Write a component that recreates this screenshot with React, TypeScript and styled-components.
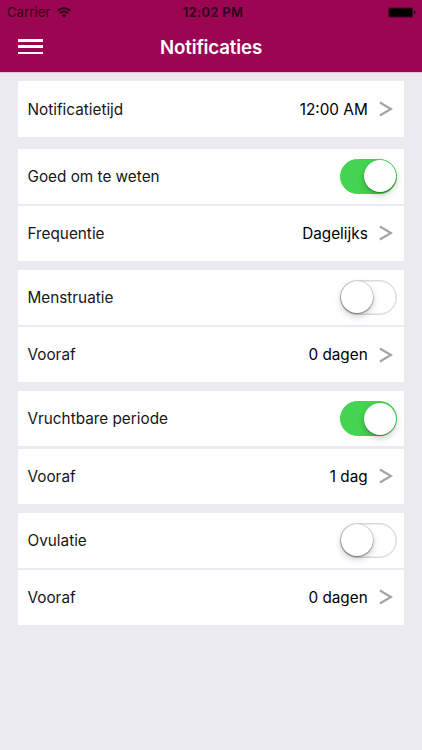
import React, { useState } from "react";
import styled, { createGlobalStyle } from "styled-components";

const GlobalStyle = createGlobalStyle`
  * { box-sizing: border-box; }
  body {
    margin: 0;
    background: #ebeaf0;
    font-family: Inter, "Liberation Sans", sans-serif;
    color: #161616;
  }
`;

const Screen = styled.div`
  width: 422px;
  height: 750px;
  overflow: hidden;
  background: #ebeaf0;
`;

const Header = styled.header`
  height: 73px;
  background: #9b0552;
  border-bottom: 1px solid #efbdd7;
`;

const StatusBar = styled.div`
  height: 24px;
  padding: 0 6px 0 7px;
  display: grid;
  grid-template-columns: 1fr auto 1fr;
  align-items: center;
  font-size: 13px;
  line-height: 24px;
  color: #2b0418;
`;

const Carrier = styled.div`
  display: flex;
  align-items: center;
  gap: 6.5px;
  letter-spacing: 0.1px;
`;

const Clock = styled.div`
  font-weight: 600;
  letter-spacing: 0.3px;
  padding-left: 3px;
`;

const BatteryIcon = styled.svg`
  justify-self: end;
`;

const NavBar = styled.div`
  height: 48px;
  padding: 0 18px;
  display: grid;
  grid-template-columns: 26px 1fr 26px;
  align-items: center;
`;

const MenuButton = styled.button`
  width: 25px;
  height: 15px;
  padding: 0;
  border: 0;
  background: none;
  display: flex;
  flex-direction: column;
  justify-content: space-between;
  margin-top: -3px;
`;

const MenuLine = styled.span`
  height: 2.5px;
  background: #fff;
`;

const Title = styled.h1`
  margin: 0;
  text-align: center;
  color: #fff;
  font-size: 18.7px;
  font-weight: 600;
  line-height: 48px;
  letter-spacing: -0.15px;
`;

const List = styled.main`
  padding: 8px 18.3px 0 18px;
`;

const Group = styled.section<{ $gap: number }>`
  display: grid;
  row-gap: 2.3px;
  margin-bottom: ${(p) => p.$gap}px;
`;

const Row = styled.div<{ $height?: number }>`
  height: ${(p) => p.$height ?? 55}px;
  padding: 0 7px 0 9.5px;
  display: flex;
  align-items: center;
  justify-content: space-between;
  background: #fff;
  font-size: 15.3px;
`;

const Value = styled.div`
  display: flex;
  align-items: center;
  gap: 11px;
  padding-right: 4px;
  color: #000;
`;

const Track = styled.button<{ $on: boolean }>`
  width: 57px;
  height: 35px;
  padding: 0;
  border: 1.5px solid ${(p) => (p.$on ? "#43d551" : "#dadada")};
  border-radius: 18px;
  background: ${(p) => (p.$on ? "#43d551" : "#fff")};
  box-shadow: inset 0 0 0 0.5px ${(p) => (p.$on ? "#43d551" : "#dadada")};
  display: flex;
  align-items: center;
  justify-content: ${(p) => (p.$on ? "flex-end" : "flex-start")};
`;

const Thumb = styled.span<{ $on: boolean }>`
  width: 32px;
  height: 32px;
  border-radius: 50%;
  background: #fff;
  box-shadow: ${(p) =>
    p.$on
      ? "0 1px 1px rgba(0,40,0,.35), 0 3px 7px rgba(0,0,0,.22)"
      : "0 0.5px 1px 0.5px rgba(0,0,0,.38), 0 3px 7px rgba(0,0,0,.22)"};
`;

function Chevron() {
  return (
    <svg width="14" height="18" viewBox="0 0 14 18" fill="none">
      <path d="M0.9 2.5 12 9 0.9 15.5" stroke="#a3a3a3" strokeWidth="2.1" />
    </svg>
  );
}

function Wifi() {
  return (
    <svg width="14" height="11" viewBox="0 0 14 11" fill="none" stroke="#2b0418" strokeWidth="1.9">
      <path d="M0.8 3.7a8.9 8.9 0 0 1 12.4 0" />
      <path d="M3 6.3a5.7 5.7 0 0 1 8 0" />
      <path d="M7 10.7 4.8 8.3a3 3 0 0 1 4.4 0z" fill="#2b0418" stroke="none" />
    </svg>
  );
}

function Switch({ initial, label }: { initial: boolean; label: string }) {
  const [on, setOn] = useState(initial);
  return (
    <Track $on={on} role="switch" aria-checked={on} aria-label={label} onClick={() => setOn(!on)}>
      <Thumb $on={on} />
    </Track>
  );
}

function ValueRow({ label, value, height }: { label: string; value: string; height?: number }) {
  return (
    <Row $height={height}>
      <span>{label}</span>
      <Value>
        <span>{value}</span>
        <Chevron />
      </Value>
    </Row>
  );
}

const groups = [
  { title: "Goed om te weten", on: true, label: "Frequentie", value: "Dagelijks" },
  { title: "Menstruatie", on: false, label: "Vooraf", value: "0 dagen" },
  { title: "Vruchtbare periode", on: true, label: "Vooraf", value: "1 dag" },
  { title: "Ovulatie", on: false, label: "Vooraf", value: "0 dagen" },
];

export default function App() {
  return (
    <Screen>
      <GlobalStyle />
      <Header>
        <StatusBar>
          <Carrier>
            Carrier
            <Wifi />
          </Carrier>
          <Clock>12:02 PM</Clock>
          <BatteryIcon width="28" height="11" viewBox="0 0 28 11">
            <rect x="0.3" y="0.5" width="24.8" height="10" rx="1.5" fill="#4d0229" />
            <rect x="1.4" y="1.5" width="22.6" height="8" rx="0.6" fill="#000" />
            <path d="M26 3.6a2 2 0 0 1 0 3.8z" fill="#2b0418" />
          </BatteryIcon>
        </StatusBar>
        <NavBar>
          <MenuButton aria-label="Menu">
            <MenuLine />
            <MenuLine />
            <MenuLine />
          </MenuButton>
          <Title>Notificaties</Title>
        </NavBar>
      </Header>
      <List>
        <Group $gap={11.7}>
          <ValueRow label="Notificatietijd" value="12:00 AM" height={56} />
        </Group>
        {groups.map((g) => (
          <Group key={g.title} $gap={9}>
            <Row>
              <span>{g.title}</span>
              <Switch initial={g.on} label={g.title} />
            </Row>
            <ValueRow label={g.label} value={g.value} />
          </Group>
        ))}
      </List>
    </Screen>
  );
}
